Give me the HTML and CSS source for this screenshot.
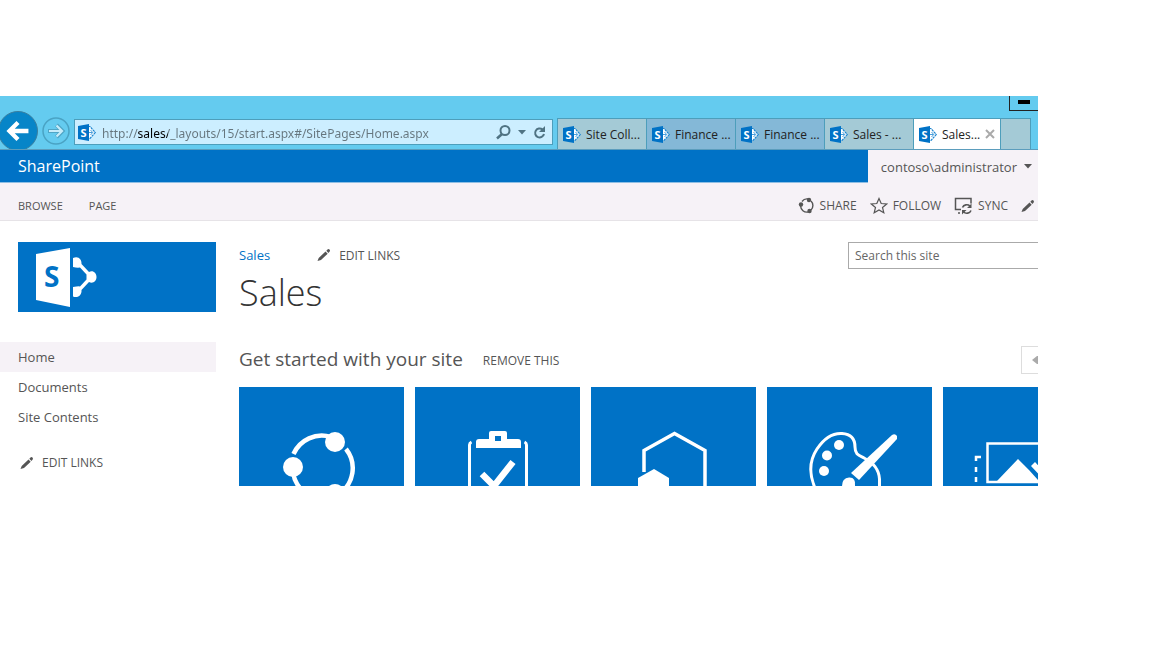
FILE: index.html
```html
<!DOCTYPE html>
<html lang="en">
<head>
<meta charset="utf-8">
<title>Sales - Home</title>
<link rel="stylesheet" href="styles.css">
</head>
<body>
<svg class="defs" aria-hidden="true">
  <symbol id="sp" viewBox="0 0 18 17">
    <path d="M10 2.500H12L17.300 8.500 12 14.500H10Z" fill="#fff" stroke="#1c86d1" stroke-width="1.200" stroke-dasharray="2.500 .7"/>
    <path d="M10 8.500H14.500M12.500 6 14.700 8.500 12.500 11" fill="none" stroke="#4ba0dc" stroke-width="1"/>
    <path fill="#0072c6" d="M0 2 11 0V17L0 15Z"/>
    <text class="sp-letter" x="2.500" y="12.500">S</text>
  </symbol>
  <symbol id="pencil" viewBox="0 0 14 14">
    <path fill="#555" d="M.500 13 1.700 10 8.500 3.500 10.700 5.700 4 12ZM9.300 2.700 10.800 1.300Q11.600.700 12.500 1.600T12.700 3.400L11.400 4.900Z"/>
  </symbol>
</svg>
<div class="window">
  <header class="chrome">
    <div class="nav-buttons">
      <button class="back" aria-label="Back"><svg viewBox="0 0 40 40"><path d="M31 20H12M20 11 11 20 20 29" fill="none" stroke="#fff" stroke-width="4.500"/></svg></button>
      <button class="forward" aria-label="Forward"><svg viewBox="0 0 28 28"><circle cx="14" cy="14" r="13" fill="none" stroke="#4aa3c4" stroke-width="1.500"/><path d="M6 14H20M14.500 8 20.500 14 14.500 20" fill="none" stroke="#4fa6c6" stroke-width="4"/><path d="M7 14H20M14.500 8.500 20 14 14.500 19.500" fill="none" stroke="#c5ecfa" stroke-width="2.200"/></svg></button>
    </div>
    <div class="address">
      <svg class="fav"><use href="#sp"/></svg>
      <input type="text" aria-label="Address" value="http://sales/_layouts/15/start.aspx#/SitePages/Home.aspx">
      <button aria-label="Search"><svg width="15" height="16" viewBox="0 0 15 16"><circle cx="9" cy="6.500" r="4.500" fill="none" stroke="#4f7383" stroke-width="2"/><path d="M6 10 1 14.500" stroke="#4f7383" stroke-width="2.500"/></svg></button>
      <button aria-label="Show addresses"><svg width="8" height="5" viewBox="0 0 8 5"><path d="M0 0H8L4 4.500Z" fill="#4f7383"/></svg></button>
      <button aria-label="Refresh"><svg width="14" height="15" viewBox="0 0 14 15"><path d="M9.500 4.500A4.500 4.500 0 1 0 11 9" fill="none" stroke="#4f7383" stroke-width="2"/><path d="M12 1V7H6Z" fill="#4f7383"/></svg></button>
    </div>
    <nav class="tabs" aria-label="Tabs">
      <button class="tab"><svg class="fav"><use href="#sp"/></svg>Site Coll...</button>
      <button class="tab finance"><svg class="fav"><use href="#sp"/></svg>Finance ...</button>
      <button class="tab finance"><svg class="fav"><use href="#sp"/></svg>Finance ...</button>
      <button class="tab"><svg class="fav"><use href="#sp"/></svg>Sales - ...</button>
      <button class="tab active"><svg class="fav"><use href="#sp"/></svg>Sales...<svg class="close" viewBox="0 0 10 10"><path d="M1 1 9 9M9 1 1 9" stroke="#aaa" stroke-width="2"/></svg></button>
      <button class="tab new" aria-label="New tab"></button>
    </nav>
    <button class="minimise" aria-label="Minimise"><svg width="12" height="4" viewBox="0 0 12 4"><path d="M0 0H12V4H0Z"/></svg></button>
  </header>

  <div class="suite">
    <a class="brand" href="#">SharePoint</a>
    <button class="user">contoso\administrator<svg width="8" height="5" viewBox="0 0 8 5"><path d="M0 0H8L4 4.500Z" fill="#555"/></svg></button>
  </div>

  <div class="ribbon">
    <div class="ribbon-tabs"><button>BROWSE</button><button>PAGE</button></div>
    <div class="actions">
      <button><svg width="17" height="17" viewBox="0 0 17 17"><path d="M4 4.500A6.300 6.300 0 0 1 10 2M13 4A6.300 6.300 0 0 1 13 13M10 15A6.300 6.300 0 0 1 2.600 9" fill="none" stroke="#555" stroke-width="1.400"/><circle cx="11" cy="3" r="2.200" fill="#555"/><circle cx="3" cy="7.500" r="2.200" fill="#555"/><circle cx="11.500" cy="14" r="2.200" fill="#555"/></svg>SHARE</button>
      <button><svg width="18" height="17" viewBox="0 0 18 17"><path d="M9 1.500 11.200 6.500 16.700 7 12.500 10.500 13.800 15.700 9 12.900 4.200 15.700 5.500 10.500 1.300 7 6.800 6.500Z" fill="none" stroke="#555" stroke-width="1.200"/></svg>FOLLOW</button>
      <button><svg width="19" height="18" viewBox="0 0 19 18"><path d="M7 12.500H1.500V1.500H17V6.500M4 16H6" fill="none" stroke="#555" stroke-width="1.500"/><path d="M8.500 10.500A4.500 4 0 0 1 16 9M17 13.500A4.500 4 0 0 1 9.500 15" fill="none" stroke="#555" stroke-width="1.600"/><path d="M17.500 6.500V11H13ZM8 17.500V13H12.500Z" fill="#555"/></svg>SYNC</button>
      <button aria-label="Edit"><svg width="14" height="14"><use href="#pencil"/></svg></button>
    </div>
  </div>

  <div class="page">
    <aside class="side">
      <a class="site-logo" href="#" aria-label="Site home"><svg width="62" height="62" viewBox="0 0 62 62">
        <path fill="#fff" d="M1 8 35 2V61L1 54Z"/>
        <path fill="#fff" d="M38 12C43 9.500 47 13 46.500 18L54 26C58 24 61.500 27 61.500 31S58 38 54 36L46.500 44C47 49 43 52.500 38 50.500V41Q44 40 45 40.500L51.500 33.500V28.500L45 21.500Q42 22 38 21Z"/>
        <text class="logo-letter" x="9" y="41">S</text>
      </svg></a>
      <nav class="quick">
        <a class="current" href="#">Home</a>
        <a href="#">Documents</a>
        <a href="#">Site Contents</a>
      </nav>
      <button class="edit"><svg width="14" height="14"><use href="#pencil"/></svg>EDIT LINKS</button>
    </aside>
    <main class="main">
      <div class="top">
        <div class="titles">
          <div class="top-links"><a href="#">Sales</a><button class="edit"><svg width="14" height="14"><use href="#pencil"/></svg>EDIT LINKS</button></div>
          <h1>Sales</h1>
        </div>
        <input class="search" type="search" aria-label="Search this site" placeholder="Search this site">
      </div>
      <div class="started">
        <h2>Get started with your site</h2>
        <button class="remove">REMOVE THIS</button>
        <button class="prev" aria-label="Previous"><svg width="6" height="8" viewBox="0 0 6 8"><path d="M6 0V8H5L0 4 5 0Z" fill="#aaa"/></svg></button>
      </div>
      <div class="tiles">
        <a class="tile" href="#" aria-label="Share your site"><svg viewBox="0 0 165 99"><g fill="none" stroke="#fff" stroke-width="4.500"><path d="M54.500 67A31 31 0 0 1 92 50M107 62A31 31 0 0 1 100 107M86 112A31 31 0 0 1 54 85"/></g><g fill="#fff"><circle cx="96" cy="55" r="10"/><circle cx="54" cy="80" r="10"/><circle cx="96" cy="107" r="10"/></g></svg></a>
        <a class="tile" href="#" aria-label="Working on a deadline"><svg viewBox="0 0 165 99"><path fill="#fff" fill-rule="evenodd" d="M61 61V55Q61 52 64 52H74V46Q74 44 76 44H90Q92 44 92 46V52H103Q106 52 106 55V61ZM80 49V54H86V49Z"/><path d="M56.500 55Q54.500 56 54.500 58V99M109.500 55Q111.500 56 111.500 58V99" fill="none" stroke="#fff" stroke-width="3"/><path d="M67 87 79 99 98 75" fill="none" stroke="#fff" stroke-width="6.500"/></svg></a>
        <a class="tile" href="#" aria-label="Add lists, libraries and apps"><svg viewBox="0 0 165 99"><path d="M53 85V63.500L83.500 46.500 114 63.500V99" fill="none" stroke="#fff" stroke-width="3.500"/><path d="M47 99V91L63 82 78 91V99Z" fill="#fff"/></svg></a>
        <a class="tile" href="#" aria-label="What's your style"><svg viewBox="0 0 165 99"><path d="M48 101C42 87 42 74 50 62 58 50 67 46 75 46.500 84 47 88 52 88 60 88 67 91 68 97 71 107 76 112 83 112.500 92V101" fill="none" stroke="#fff" stroke-width="3"/><g fill="#fff"><circle cx="72" cy="58" r="5"/><circle cx="60" cy="68.500" r="5"/><circle cx="57" cy="84" r="5"/></g><path d="M125 48Q128 46 130 49V52L92 93 84 86Z" fill="#fff"/><path d="M75 99Q75 91 82 90.500T88 99Z" fill="#fff"/></svg></a>
        <a class="tile" href="#" aria-label="Your site. Your brand."><svg viewBox="0 0 165 99"><path d="M100 56.500H44.500V95H100" fill="none" stroke="#fff" stroke-width="2.500"/><path d="M54 94 75 72 86 83 96 94ZM88 79 92 75 110 94H102Z" fill="#fff"/><path d="M38 70H33V74M33 80V85M33 90V95" fill="none" stroke="#fff" stroke-width="2.500"/></svg></a>
      </div>
    </main>
  </div>
</div>
</body>
</html>
```
FILE: styles.css
```css
* { box-sizing: border-box; }
body { margin: 0; background: #fff; color: #555; font-family: "Open Sans", "Noto Sans", sans-serif; font-size: 13px; }
button { border: 0; padding: 0; background: none; color: inherit; font: inherit; white-space: nowrap; }
a { color: inherit; text-decoration: none; }
svg { display: block; flex: none; }
.defs { display: none; }
.sp-letter { fill: #fff; font: bold 11px "Open Sans", sans-serif; }
.logo-letter { fill: #0072c6; font: bold 28px "Open Sans", sans-serif; }
.window { position: relative; margin: 96px 114px 0 0; overflow: hidden; }

.chrome { display: flex; align-items: flex-end; height: 54px; padding-right: 7px; overflow: hidden; background: #64cbef; border-bottom: 1px solid #5b9dbd; font-size: 12px; }
.nav-buttons { display: flex; align-items: center; width: 74px; height: 36px; margin-left: -2px; flex: none; gap: 4px; }
.back { width: 40px; height: 40px; flex: none; border-radius: 50%; background: #0785c8; border: 1px solid #3b7f9f; }
.forward { width: 28px; height: 28px; flex: none; }
.address { display: flex; align-items: center; flex: 1; min-width: 0; height: 26px; margin: 0 4px 4px 2px; padding: 0 5px 0 3px; gap: 7px; border: 1px solid #4d9ebb; background: #cceeff; }
.fav { width: 18px; height: 17px; }
.address input { flex: 1; min-width: 0; padding: 2px 0 0; margin-left: -1px; border: 0; outline: 0; color: transparent; font: 12px "Noto Sans", sans-serif; background: linear-gradient(90deg, #66767e 36px, #000 36px, #000 66px, #66767e 66px); background-clip: text; -webkit-background-clip: text; }
.tabs { display: flex; height: 31px; flex: none; border: solid #4d9ebb; border-width: 1px 0 0 1px; }
.tab { display: flex; align-items: center; width: 89px; padding: 0 5px; gap: 5px; border-right: 1px solid #4d9ebb; background: #a4cad6; color: #222; }
.finance { background: #84b8d7; }
.active { width: 87px; background: #fff; }
.close { width: 10px; height: 10px; }
.new { width: 30px; }
.minimise { position: absolute; top: 0; right: 0; display: flex; justify-content: center; width: 29px; height: 15px; padding-top: 4px; border: solid #222; border-width: 0 0 1px 1px; }

.suite { display: flex; height: 33px; background: #0072c6; border-bottom: 1px solid #8fbfe4; }
.brand { display: flex; align-items: center; flex: 1; padding-left: 18px; color: #fff; font-size: 16px; }
.user { display: flex; align-items: center; height: 33px; padding: 0 6px 0 13px; gap: 7px; background: #f6f2f7; }
.ribbon { display: flex; align-items: center; justify-content: space-between; height: 38px; padding: 8px 3px 0 18px; background: #f6f2f7; border-bottom: 1px solid #e6e3e7; font-size: 12px; }
.ribbon-tabs { display: flex; gap: 26px; font-size: 11px; }
.actions { display: flex; gap: 13px; }
.actions button { display: flex; align-items: center; gap: 5px; }

.page { display: flex; gap: 23px; padding-top: 21px; }
.side { width: 216px; flex: none; }
.site-logo { display: flex; align-items: center; height: 70px; margin-left: 18px; padding-left: 17px; background: #0072c6; }
.quick { display: flex; flex-direction: column; margin-top: 30px; }
.quick a { height: 30px; padding-left: 18px; line-height: 31px; }
.quick .current { background: #f6f2f7; }
.edit { display: flex; align-items: center; gap: 8px; font-size: 12px; }
.side .edit { margin: 22px 0 0 20px; }
.main { flex: 1; min-width: 0; overflow: hidden; }
.top { display: flex; justify-content: space-between; height: 100px; }
.top-links { display: flex; align-items: center; height: 26px; gap: 47px; }
.top-links > a { color: #0072c6; }
h1 { margin: 0; color: #333; font-size: 36px; font-weight: 300; line-height: 50px; }
.search { width: 192px; height: 27px; margin-right: -2px; padding: 0 6px; border: 1px solid #aaa; color: #555; font: 12px "Open Sans", sans-serif; outline: 0; }
.search::placeholder { color: #666; opacity: 1; }
.started { display: flex; align-items: center; height: 45px; padding-bottom: 12px; }
h2 { margin: 0; color: #555; font-size: 19px; font-weight: 400; white-space: nowrap; }
.remove { margin: 4px auto 0 20px; font-size: 12px; }
.prev { display: flex; align-items: center; justify-content: flex-end; width: 17px; height: 28px; margin-top: 3px; border: 1px solid #ddd; border-right: 0; }
.tiles { display: flex; gap: 11px; }
.tile { flex: none; width: 165px; background: #0072c6; }
```
